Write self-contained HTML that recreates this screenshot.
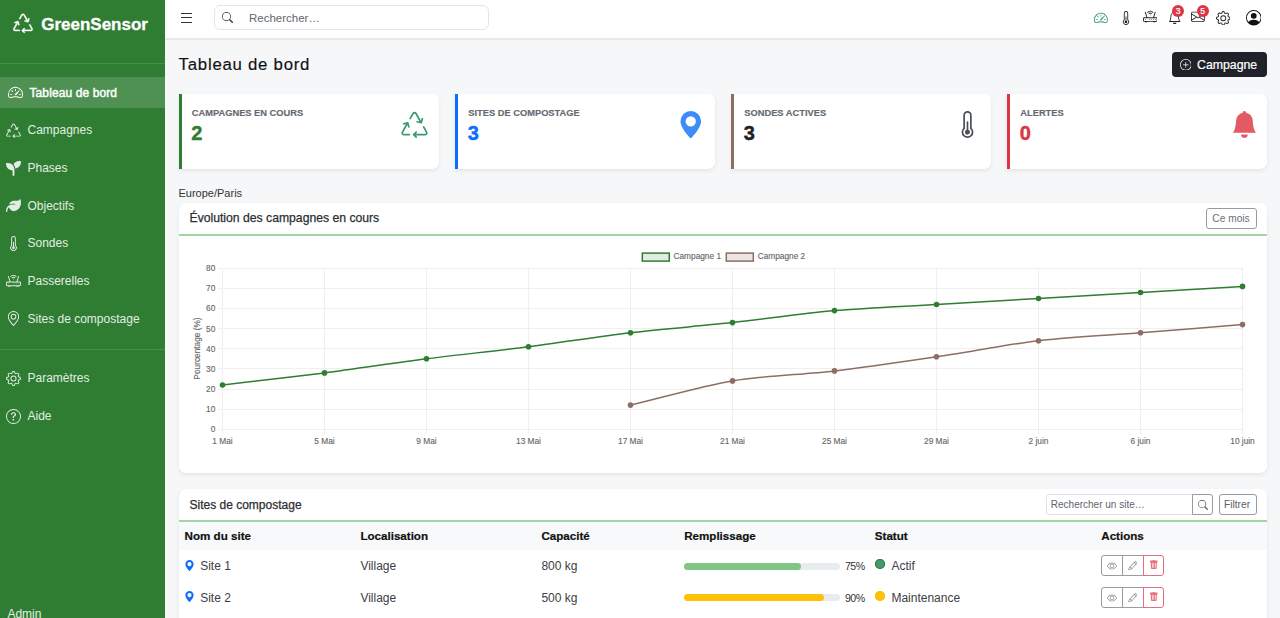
<!DOCTYPE html><html><head><meta charset="utf-8"><style>
*{box-sizing:border-box;margin:0;padding:0}
html,body{width:1280px;height:618px;overflow:hidden}
body{background:#f5f7f8;font-family:"Liberation Sans",sans-serif;position:relative;color:#212529}
.abs{position:absolute;white-space:nowrap}
.t{position:absolute;white-space:nowrap;line-height:1}
#sb{position:absolute;left:0;top:0;width:165px;height:618px;background:#2e7d32}
.sep{position:absolute;left:0;width:165px;height:1px;background:rgba(255,255,255,.13)}
.nav{position:absolute;left:0;width:165px;height:31px;color:#e3ede3;font-size:12px;line-height:31px;white-space:nowrap}
.nav span{position:absolute;left:27.5px;top:.6px}
.nav.act{background:rgba(255,255,255,.16);color:#fff}
#tb{position:absolute;left:165px;top:0;width:1115px;height:38px;background:#fff;border-bottom:2px solid #e8eaeb;box-sizing:content-box}
.card{position:absolute;background:#fff;border-radius:7px;box-shadow:0 2px 4px rgba(0,0,0,.075)}
.stat{top:93.5px;width:260px;height:75px;border-left:3.5px solid #2e7d32;border-radius:0 7px 7px 0}
.lab{position:absolute;left:10.3px;top:15.2px;font-size:9.3px;line-height:1;font-weight:bold;color:#646a72;-webkit-text-stroke:.15px #646a72;white-space:nowrap}
.num{position:absolute;left:9.8px;top:29.5px;font-size:20px;line-height:1;font-weight:bold;-webkit-text-stroke:.4px currentColor;white-space:nowrap}
.btn{position:absolute;border:1px solid #979ca1;border-radius:3px;background:#fff}
th,td{text-align:left}
</style></head><body>
<div id="sb">
<svg class="abs" style="left:13.3px;top:12.7px;overflow:visible;stroke:#fff;stroke-width:.25" width="20" height="20" viewBox="0 0 16 16" fill="#fff"><path d="M9.302 1.256a1.5 1.5 0 0 0-2.604 0l-1.704 2.98a.5.5 0 0 0 .869.497l1.703-2.981a.5.5 0 0 1 .868 0l2.54 4.444-1.256-.337a.5.5 0 1 0-.26.966l2.415.647a.5.5 0 0 0 .613-.353l.647-2.415a.5.5 0 1 0-.966-.259l-.333 1.242zM2.973 7.773l-1.255.337a.5.5 0 1 1-.26-.966l2.416-.647a.5.5 0 0 1 .612.353l.647 2.415a.5.5 0 0 1-.966.259l-.333-1.242-2.545 4.454a.5.5 0 0 0 .434.748H5a.5.5 0 0 1 0 1H1.723A1.5 1.5 0 0 1 .421 12.24zm10.89 1.463a.5.5 0 1 0-.868.496l1.716 3.004a.5.5 0 0 1-.434.748h-5.57l.647-.646a.5.5 0 1 0-.708-.707l-1.5 1.5a.5.5 0 0 0 0 .707l1.5 1.5a.5.5 0 1 0 .708-.707l-.647-.647h5.57a1.5 1.5 0 0 0 1.302-2.244z"/></svg>
<div class="t" style="left:41.2px;top:16.4px;font-size:17px;font-weight:bold;color:#fff;-webkit-text-stroke:.3px #fff">GreenSensor</div>
<div class="sep" style="top:62.5px"></div>
<div class="nav act" style="top:77.0px">
<svg class="abs" style="left:8.2px;top:8px" width="15" height="15" viewBox="0 0 16 16" fill="#fff"><path d="M8 4a.5.5 0 0 1 .5.5V6a.5.5 0 0 1-1 0V4.5A.5.5 0 0 1 8 4M3.732 5.732a.5.5 0 0 1 .707 0l.915.914a.5.5 0 1 1-.708.708l-.914-.915a.5.5 0 0 1 0-.707M2 10a.5.5 0 0 1 .5-.5h1.586a.5.5 0 0 1 0 1H2.5A.5.5 0 0 1 2 10m9.5 0a.5.5 0 0 1 .5-.5h1.5a.5.5 0 0 1 0 1H12a.5.5 0 0 1-.5-.5m.754-4.246a.39.39 0 0 0-.527-.02L7.547 9.31a.91.91 0 1 0 1.302 1.258l3.434-4.297a.39.39 0 0 0-.029-.518z"/><path fill-rule="evenodd" d="M0 10a8 8 0 1 1 15.547 2.661c-.442 1.253-1.845 1.602-2.932 1.25C11.309 13.488 9.475 13 8 13c-1.474 0-3.31.488-4.615.911-1.087.352-2.49.003-2.932-1.25A8 8 0 0 1 0 10m8-7a7 7 0 0 0-6.603 9.329c.203.575.923.876 1.68.63C4.397 12.533 6.358 12 8 12s3.604.532 4.923.96c.757.245 1.477-.056 1.68-.631A7 7 0 0 0 8 3"/></svg>
<span style="left:29.5px;letter-spacing:.1px;font-size:12px;-webkit-text-stroke:.45px #fff">Tableau de bord</span>
</div>
<div class="nav" style="top:114.69999999999999px">
<svg class="abs" style="left:6.2px;top:8px" width="15" height="15" viewBox="0 0 16 16" fill="#e3ede3"><path d="M9.302 1.256a1.5 1.5 0 0 0-2.604 0l-1.704 2.98a.5.5 0 0 0 .869.497l1.703-2.981a.5.5 0 0 1 .868 0l2.54 4.444-1.256-.337a.5.5 0 1 0-.26.966l2.415.647a.5.5 0 0 0 .613-.353l.647-2.415a.5.5 0 1 0-.966-.259l-.333 1.242zM2.973 7.773l-1.255.337a.5.5 0 1 1-.26-.966l2.416-.647a.5.5 0 0 1 .612.353l.647 2.415a.5.5 0 0 1-.966.259l-.333-1.242-2.545 4.454a.5.5 0 0 0 .434.748H5a.5.5 0 0 1 0 1H1.723A1.5 1.5 0 0 1 .421 12.24zm10.89 1.463a.5.5 0 1 0-.868.496l1.716 3.004a.5.5 0 0 1-.434.748h-5.57l.647-.646a.5.5 0 1 0-.708-.707l-1.5 1.5a.5.5 0 0 0 0 .707l1.5 1.5a.5.5 0 1 0 .708-.707l-.647-.647h5.57a1.5 1.5 0 0 0 1.302-2.244z"/></svg>
<span>Campagnes</span>
</div>
<div class="nav" style="top:152.5px">
<svg class="abs" style="left:6.2px;top:8px" width="15" height="15" viewBox="0 0 512 512" fill="#e3ede3"><path d="M512 32c0 113.6-84.6 207.5-194.2 222c-7.1-53.4-30.6-101.6-65.3-139.3C290.8 46.3 364 0 448 0h32c17.7 0 32 14.3 32 32zM0 96C0 78.3 14.3 64 32 64H64c123.7 0 224 100.3 224 224v32V480c0 17.7-14.3 32-32 32s-32-14.3-32-32V320C100.3 320 0 219.7 0 96z"/></svg>
<span>Phases</span>
</div>
<div class="nav" style="top:190.2px">
<svg class="abs" style="left:6.2px;top:8px" width="15" height="15" viewBox="0 0 512 512" fill="#e3ede3"><path d="M272 96c-78.6 0-145.1 51.5-167.7 122.5c33.6-17 71.5-26.5 111.7-26.5h88c8.8 0 16 7.2 16 16s-7.2 16-16 16H288 216s0 0 0 0c-16.6 0-32.7 1.900-48.3 5.4c-25.9 5.9-49.9 16.4-71.4 30.7c0 0 0 0 0 0C38.3 298.8 0 364.9 0 440v16c0 13.3 10.7 24 24 24s24-10.7 24-24V440c0-48.7 20.7-92.5 53.8-123.2C121.6 392.3 190.3 448 272 448l1 0c132.1-.7 239-130.9 239-291.4c0-42.600-7.5-83.1-21.1-119.6c-2.6-6.9-12.7-6.6-16.2 .1C479.6 63.6 437.3 96 384 96H272z"/></svg>
<span>Objectifs</span>
</div>
<div class="nav" style="top:227.9px">
<svg class="abs" style="left:6.2px;top:8px" width="15" height="15" viewBox="0 0 16 16" fill="#e3ede3"><path d="M9.5 12.5a1.5 1.5 0 1 1-2-1.415V6.5a.5.5 0 0 1 1 0v4.585a1.5 1.5 0 0 1 1 1.415"/><path d="M5.5 2.5a2.5 2.5 0 0 1 5 0v7.55a3.5 3.5 0 1 1-5 0zM8 1a1.5 1.5 0 0 0-1.5 1.5v7.987l-.167.15a2.5 2.5 0 1 0 3.333 0l-.166-.15V2.5A1.5 1.5 0 0 0 8 1"/></svg>
<span>Sondes</span>
</div>
<div class="nav" style="top:265.6px">
<svg class="abs" style="left:6.2px;top:8px" width="15" height="15" viewBox="0 0 16 16" fill="#e3ede3"><path d="M5.525 3.025a3.5 3.5 0 0 1 4.95 0 .5.5 0 1 0 .707-.707 4.5 4.5 0 0 0-6.364 0 .5.5 0 0 0 .707.707"/><path d="M6.94 4.44a1.5 1.5 0 0 1 2.12 0 .5.5 0 0 0 .708-.708 2.5 2.5 0 0 0-3.536 0 .5.5 0 0 0 .707.707M2.5 11a.5.5 0 1 1 0-1 .5.5 0 0 1 0 1m4.5-.5a.5.5 0 1 0 1 0 .5.5 0 0 0-1 0m2.5.5a.5.5 0 1 1 0-1 .5.5 0 0 1 0 1m1.5-.5a.5.5 0 1 0 1 0 .5.5 0 0 0-1 0m2 0a.5.5 0 1 0 1 0 .5.5 0 0 0-1 0"/><path d="M2.974 2.342a.5.5 0 1 0-.948.316L3.806 8H1.5A1.5 1.5 0 0 0 0 9.5v2A1.5 1.5 0 0 0 1.5 13H2a.5.5 0 0 0 .5.5h2A.5.5 0 0 0 5 13h6a.5.5 0 0 0 .5.5h2a.5.5 0 0 0 .5-.5h.5a1.5 1.5 0 0 0 1.5-1.5v-2A1.5 1.5 0 0 0 14.5 8h-2.306l1.78-5.342a.5.5 0 1 0-.948-.316L11.14 8H4.86zM14.5 9a.5.5 0 0 1 .5.5v2a.5.5 0 0 1-.5.5h-13a.5.5 0 0 1-.5-.5v-2a.5.5 0 0 1 .5-.5z"/><path d="M8.5 5.5a.5.5 0 1 1-1 0 .5.5 0 0 1 1 0"/></svg>
<span>Passerelles</span>
</div>
<div class="nav" style="top:303.3px">
<svg class="abs" style="left:6.2px;top:8px" width="15" height="15" viewBox="0 0 16 16" fill="#e3ede3"><path d="M12.166 8.94c-.524 1.062-1.234 2.12-1.96 3.07A32 32 0 0 1 8 14.58a32 32 0 0 1-2.206-2.57c-.726-.95-1.436-2.008-1.960-3.070C3.304 7.867 3 6.862 3 6a5 5 0 0 1 10 0c0 .862-.305 1.867-.834 2.94M8 16s6-5.686 6-10A6 6 0 0 0 2 6c0 4.314 6 10 6 10"/><path d="M8 8a2 2 0 1 1 0-4 2 2 0 0 1 0 4m0 1a3 3 0 1 0 0-6 3 3 0 0 0 0 6"/></svg>
<span>Sites de compostage</span>
</div>
<div class="nav" style="top:362.7px">
<svg class="abs" style="left:6.2px;top:8px" width="15" height="15" viewBox="0 0 16 16" fill="#e3ede3"><path d="M8 4.754a3.246 3.246 0 1 0 0 6.492 3.246 3.246 0 0 0 0-6.492M5.754 8a2.246 2.246 0 1 1 4.492 0 2.246 2.246 0 0 1-4.492 0"/><path d="M9.796 1.343c-.527-1.79-3.065-1.79-3.592 0l-.094.319a.873.873 0 0 1-1.255.52l-.292-.16c-1.64-.892-3.433.902-2.54 2.541l.159.292a.873.873 0 0 1-.52 1.255l-.319.094c-1.79.527-1.790 3.065 0 3.592l.319.094a.873.873 0 0 1 .52 1.255l-.16.292c-.892 1.64.901 3.434 2.541 2.54l.292-.159a.873.873 0 0 1 1.255.52l.094.319c.527 1.79 3.065 1.79 3.592 0l.094-.319a.873.873 0 0 1 1.255-.52l.292.16c1.64.893 3.434-.902 2.54-2.541l-.159-.292a.873.873 0 0 1 .52-1.255l.319-.094c1.79-.527 1.79-3.065 0-3.592l-.319-.094a.873.873 0 0 1-.52-1.255l.16-.292c.893-1.64-.902-3.433-2.541-2.54l-.292.159a.873.873 0 0 1-1.255-.52zm-2.633.283c.246-.835 1.428-.835 1.674 0l.094.319a1.873 1.873 0 0 0 2.693 1.115l.291-.16c.764-.415 1.6.42 1.184 1.185l-.159.292a1.873 1.873 0 0 0 1.116 2.692l.318.094c.835.246.835 1.428 0 1.674l-.319.094a1.873 1.873 0 0 0-1.115 2.693l.16.291c.415.764-.42 1.6-1.185 1.184l-.291-.159a1.873 1.873 0 0 0-2.693 1.116l-.094.318c-.246.835-1.428.835-1.674 0l-.094-.319a1.873 1.873 0 0 0-2.692-1.115l-.292.16c-.764.415-1.6-.42-1.184-1.185l.159-.291A1.873 1.873 0 0 0 1.945 8.93l-.319-.094c-.835-.246-.835-1.428 0-1.674l.319-.094A1.873 1.873 0 0 0 3.060 4.377l-.16-.292c-.415-.764.42-1.6 1.185-1.184l.292.159a1.873 1.873 0 0 0 2.692-1.115z"/></svg>
<span>Paramètres</span>
</div>
<div class="nav" style="top:400.5px">
<svg class="abs" style="left:6.2px;top:8px" width="15" height="15" viewBox="0 0 16 16" fill="#e3ede3"><path d="M8 15A7 7 0 1 1 8 1a7 7 0 0 1 0 14m0 1A8 8 0 1 0 8 0a8 8 0 0 0 0 16"/><path d="M5.255 5.786a.237.237 0 0 0 .241.247h.825c.138 0 .248-.113.266-.25.09-.656.54-1.134 1.342-1.134.686 0 1.314.343 1.314 1.168 0 .635-.374.927-.965 1.371-.673.489-1.206 1.060-1.168 1.987l.003.217a.25.25 0 0 0 .25.246h.811a.25.25 0 0 0 .25-.25v-.105c0-.718.273-.927 1.010-1.486.609-.463 1.244-.977 1.244-2.056 0-1.511-1.276-2.241-2.673-2.241-1.267 0-2.655.59-2.750 2.286m1.557 5.763c0 .533.425.927 1.010.927.609 0 1.028-.394 1.028-.927 0-.552-.42-.94-1.029-.94-.584 0-1.009.388-1.009.94"/></svg>
<span>Aide</span>
</div>
<div class="sep" style="top:348.5px"></div>
<div class="t" style="left:7.4px;top:608.3px;font-size:12px;color:#e3ede3">Admin</div>
</div>
<div id="tb"></div>
<div class="abs" style="left:181px;top:12.5px;width:11.3px;height:1.2px;background:#333"></div><div class="abs" style="left:181px;top:17px;width:11.3px;height:1.2px;background:#333"></div><div class="abs" style="left:181px;top:21.5px;width:11.3px;height:1.2px;background:#333"></div>
<div class="abs" style="left:214px;top:5.3px;width:275px;height:25px;border:1px solid #e3e5e8;border-radius:6px;background:#fff"></div>
<svg class="abs" style="left:222px;top:12.2px" width="11" height="11" viewBox="0 0 16 16" fill="#333"><path d="M11.742 10.344a6.5 6.5 0 1 0-1.397 1.398h-.001q.044.06.098.115l3.85 3.85a1 1 0 0 0 1.415-1.414l-3.85-3.85a1 1 0 0 0-.115-.1zM12 6.5a5.5 5.5 0 1 1-11 0 5.5 5.5 0 0 1 11 0"/></svg>
<div class="t" style="left:249px;top:12.8px;font-size:11.5px;color:#62686e">Rechercher…</div>
<svg class="abs" style="left:1094.3px;top:11.0px" width="13.8" height="13.8" viewBox="0 0 16 16" fill="#3a9a6e"><path d="M8 4a.5.5 0 0 1 .5.5V6a.5.5 0 0 1-1 0V4.5A.5.5 0 0 1 8 4M3.732 5.732a.5.5 0 0 1 .707 0l.915.914a.5.5 0 1 1-.708.708l-.914-.915a.5.5 0 0 1 0-.707M2 10a.5.5 0 0 1 .5-.5h1.586a.5.5 0 0 1 0 1H2.5A.5.5 0 0 1 2 10m9.5 0a.5.5 0 0 1 .5-.5h1.5a.5.5 0 0 1 0 1H12a.5.5 0 0 1-.5-.5m.754-4.246a.39.39 0 0 0-.527-.02L7.547 9.31a.91.91 0 1 0 1.302 1.258l3.434-4.297a.39.39 0 0 0-.029-.518z"/><path fill-rule="evenodd" d="M0 10a8 8 0 1 1 15.547 2.661c-.442 1.253-1.845 1.602-2.932 1.25C11.309 13.488 9.475 13 8 13c-1.474 0-3.31.488-4.615.911-1.087.352-2.49.003-2.932-1.25A8 8 0 0 1 0 10m8-7a7 7 0 0 0-6.603 9.329c.203.575.923.876 1.68.63C4.397 12.533 6.358 12 8 12s3.604.532 4.923.96c.757.245 1.477-.056 1.68-.631A7 7 0 0 0 8 3"/></svg>
<svg class="abs" style="left:1118.6px;top:10.9px" width="14" height="14" viewBox="0 0 16 16" fill="#212529"><path d="M9.5 12.5a1.5 1.5 0 1 1-2-1.415V6.5a.5.5 0 0 1 1 0v4.585a1.5 1.5 0 0 1 1 1.415"/><path d="M5.5 2.5a2.5 2.5 0 0 1 5 0v7.55a3.5 3.5 0 1 1-5 0zM8 1a1.5 1.5 0 0 0-1.5 1.5v7.987l-.167.15a2.5 2.5 0 1 0 3.333 0l-.166-.15V2.5A1.5 1.5 0 0 0 8 1"/></svg>
<svg class="abs" style="left:1142.7px;top:10.0px" width="14.5" height="14.5" viewBox="0 0 16 16" fill="#212529"><path d="M5.525 3.025a3.5 3.5 0 0 1 4.95 0 .5.5 0 1 0 .707-.707 4.5 4.5 0 0 0-6.364 0 .5.5 0 0 0 .707.707"/><path d="M6.94 4.44a1.5 1.5 0 0 1 2.12 0 .5.5 0 0 0 .708-.708 2.5 2.5 0 0 0-3.536 0 .5.5 0 0 0 .707.707M2.5 11a.5.5 0 1 1 0-1 .5.5 0 0 1 0 1m4.5-.5a.5.5 0 1 0 1 0 .5.5 0 0 0-1 0m2.5.5a.5.5 0 1 1 0-1 .5.5 0 0 1 0 1m1.5-.5a.5.5 0 1 0 1 0 .5.5 0 0 0-1 0m2 0a.5.5 0 1 0 1 0 .5.5 0 0 0-1 0"/><path d="M2.974 2.342a.5.5 0 1 0-.948.316L3.806 8H1.5A1.5 1.5 0 0 0 0 9.5v2A1.5 1.5 0 0 0 1.5 13H2a.5.5 0 0 0 .5.5h2A.5.5 0 0 0 5 13h6a.5.5 0 0 0 .5.5h2a.5.5 0 0 0 .5-.5h.5a1.5 1.5 0 0 0 1.5-1.5v-2A1.5 1.5 0 0 0 14.5 8h-2.306l1.78-5.342a.5.5 0 1 0-.948-.316L11.14 8H4.86zM14.5 9a.5.5 0 0 1 .5.5v2a.5.5 0 0 1-.5.5h-13a.5.5 0 0 1-.5-.5v-2a.5.5 0 0 1 .5-.5z"/><path d="M8.5 5.5a.5.5 0 1 1-1 0 .5.5 0 0 1 1 0"/></svg>
<svg class="abs" style="left:1167.6px;top:10.8px" width="13.4" height="13.4" viewBox="0 0 16 16" fill="#212529"><path d="M8 16a2 2 0 0 0 2-2H6a2 2 0 0 0 2 2M8 1.918l-.797.161A4 4 0 0 0 4 6c0 .628-.134 2.197-.459 3.742-.16.767-.376 1.566-.663 2.258h10.244c-.287-.692-.502-1.49-.663-2.258C12.134 8.197 12 6.628 12 6a4 4 0 0 0-3.203-3.92zM14.22 12c.223.447.481.801.78 1H1c.299-.199.557-.553.78-1C2.68 10.2 3 6.88 3 6c0-2.42 1.72-4.44 4.005-4.901a1 1 0 1 1 1.99 0A5 5 0 0 1 13 6c0 .88.32 4.2 1.22 6"/></svg>
<div class="abs" style="left:1172px;top:5.3px;width:12px;height:12px;border-radius:6px;background:#dc3545;color:#fff;font-size:8.5px;line-height:12.5px;text-align:center;-webkit-text-stroke:.2px #fff">3</div>
<svg class="abs" style="left:1191.4px;top:10.2px" width="13.8" height="13.8" viewBox="0 0 16 16" fill="#212529"><path d="M0 4a2 2 0 0 1 2-2h12a2 2 0 0 1 2 2v8a2 2 0 0 1-2 2H2a2 2 0 0 1-2-2zm2-1a1 1 0 0 0-1 1v.217l7 4.2 7-4.2V4a1 1 0 0 0-1-1zm13 2.383-4.708 2.825L15 11.105zm-.034 6.876-5.64-3.471L8 9.583l-1.326-.795-5.64 3.47A1 1 0 0 0 2 13h12a1 1 0 0 0 .966-.741M1 11.105l4.708-2.897L1 5.383z"/></svg>
<div class="abs" style="left:1196.5px;top:5.3px;width:12px;height:12px;border-radius:6px;background:#dc3545;color:#fff;font-size:8.5px;line-height:12.5px;text-align:center;-webkit-text-stroke:.2px #fff">5</div>
<svg class="abs" style="left:1215.5px;top:10.5px" width="14.5" height="14.5" viewBox="0 0 16 16" fill="#212529"><path d="M8 4.754a3.246 3.246 0 1 0 0 6.492 3.246 3.246 0 0 0 0-6.492M5.754 8a2.246 2.246 0 1 1 4.492 0 2.246 2.246 0 0 1-4.492 0"/><path d="M9.796 1.343c-.527-1.79-3.065-1.79-3.592 0l-.094.319a.873.873 0 0 1-1.255.52l-.292-.16c-1.64-.892-3.433.902-2.54 2.541l.159.292a.873.873 0 0 1-.52 1.255l-.319.094c-1.79.527-1.790 3.065 0 3.592l.319.094a.873.873 0 0 1 .52 1.255l-.16.292c-.892 1.64.901 3.434 2.541 2.54l.292-.159a.873.873 0 0 1 1.255.52l.094.319c.527 1.79 3.065 1.79 3.592 0l.094-.319a.873.873 0 0 1 1.255-.52l.292.16c1.64.893 3.434-.902 2.54-2.541l-.159-.292a.873.873 0 0 1 .52-1.255l.319-.094c1.79-.527 1.79-3.065 0-3.592l-.319-.094a.873.873 0 0 1-.52-1.255l.16-.292c.893-1.64-.902-3.433-2.541-2.54l-.292.159a.873.873 0 0 1-1.255-.52zm-2.633.283c.246-.835 1.428-.835 1.674 0l.094.319a1.873 1.873 0 0 0 2.693 1.115l.291-.16c.764-.415 1.6.42 1.184 1.185l-.159.292a1.873 1.873 0 0 0 1.116 2.692l.318.094c.835.246.835 1.428 0 1.674l-.319.094a1.873 1.873 0 0 0-1.115 2.693l.16.291c.415.764-.42 1.6-1.185 1.184l-.291-.159a1.873 1.873 0 0 0-2.693 1.116l-.094.318c-.246.835-1.428.835-1.674 0l-.094-.319a1.873 1.873 0 0 0-2.692-1.115l-.292.16c-.764.415-1.6-.42-1.184-1.185l.159-.291A1.873 1.873 0 0 0 1.945 8.93l-.319-.094c-.835-.246-.835-1.428 0-1.674l.319-.094A1.873 1.873 0 0 0 3.060 4.377l-.16-.292c-.415-.764.42-1.6 1.185-1.184l.292.159a1.873 1.873 0 0 0 2.692-1.115z"/></svg>
<svg class="abs" style="left:1245.5px;top:10px" width="15.5" height="15.5" viewBox="0 0 16 16" fill="#111"><path d="M11 6a3 3 0 1 1-6 0 3 3 0 0 1 6 0"/><path fill-rule="evenodd" d="M0 8a8 8 0 1 1 16 0A8 8 0 0 1 0 8m8-7a7 7 0 0 0-5.468 11.37C3.242 11.226 4.805 10 8 10s4.757 1.225 5.468 2.37A7 7 0 0 0 8 1"/></svg>
<div class="t" style="left:178.6px;top:57.3px;font-size:16.8px;letter-spacing:.75px;color:#111;-webkit-text-stroke:.15px #111">Tableau de bord</div>
<div class="abs" style="left:1171.5px;top:52px;width:95.5px;height:25px;border-radius:4px;background:#1f2329"></div>
<svg class="abs" style="left:1179.8px;top:58.7px" width="11.6" height="11.6" viewBox="0 0 16 16" fill="#fff"><path d="M8 15A7 7 0 1 1 8 1a7 7 0 0 1 0 14m0 1A8 8 0 1 0 8 0a8 8 0 0 0 0 16"/><path d="M8 4a.5.5 0 0 1 .5.5v3h3a.5.5 0 0 1 0 1h-3v3a.5.5 0 0 1-1 0v-3h-3a.5.5 0 0 1 0-1h3v-3A.5.5 0 0 1 8 4"/></svg>
<div class="t" style="left:1197px;top:58.5px;font-size:12.3px;color:#fff;-webkit-text-stroke:.2px #fff">Campagne</div>
<div class="card stat" style="left:178.5px;border-left-color:#2e7d32"><div class="lab">CAMPAGNES EN COURS</div><div class="num" style="color:#2e7d32">2</div></div>
<svg class="abs" style="left:401.2px;top:110.8px" width="27" height="27" viewBox="0 0 16 16" fill="#3a9a6e"><path d="M9.302 1.256a1.5 1.5 0 0 0-2.604 0l-1.704 2.98a.5.5 0 0 0 .869.497l1.703-2.981a.5.5 0 0 1 .868 0l2.54 4.444-1.256-.337a.5.5 0 1 0-.26.966l2.415.647a.5.5 0 0 0 .613-.353l.647-2.415a.5.5 0 1 0-.966-.259l-.333 1.242zM2.973 7.773l-1.255.337a.5.5 0 1 1-.26-.966l2.416-.647a.5.5 0 0 1 .612.353l.647 2.415a.5.5 0 0 1-.966.259l-.333-1.242-2.545 4.454a.5.5 0 0 0 .434.748H5a.5.5 0 0 1 0 1H1.723A1.5 1.5 0 0 1 .421 12.24zm10.89 1.463a.5.5 0 1 0-.868.496l1.716 3.004a.5.5 0 0 1-.434.748h-5.57l.647-.646a.5.5 0 1 0-.708-.707l-1.5 1.5a.5.5 0 0 0 0 .707l1.5 1.5a.5.5 0 1 0 .708-.707l-.647-.647h5.57a1.5 1.5 0 0 0 1.302-2.244z"/></svg>
<div class="card stat" style="left:455px;border-left-color:#0d6efd"><div class="lab">SITES DE COMPOSTAGE</div><div class="num" style="color:#0d6efd">3</div></div>
<svg class="abs" style="left:677.0px;top:110.5px" width="27.5" height="27.5" viewBox="0 0 16 16" fill="#3d8bf7"><path d="M8 16s6-5.686 6-10A6 6 0 0 0 2 6c0 4.314 6 10 6 10m0-7a3 3 0 1 1 0-6 3 3 0 0 1 0 6"/></svg>
<div class="card stat" style="left:731px;border-left-color:#8d6e63"><div class="lab">SONDES ACTIVES</div><div class="num" style="color:#1f2329">3</div></div>
<svg class="abs" style="left:954px;top:111px" width="27" height="27" viewBox="0 0 16 16" fill="#4a4f55"><path d="M9.5 12.5a1.5 1.5 0 1 1-2-1.415V6.5a.5.5 0 0 1 1 0v4.585a1.5 1.5 0 0 1 1 1.415"/><path d="M5.5 2.5a2.5 2.5 0 0 1 5 0v7.55a3.5 3.5 0 1 1-5 0zM8 1a1.5 1.5 0 0 0-1.5 1.5v7.987l-.167.15a2.5 2.5 0 1 0 3.333 0l-.166-.15V2.5A1.5 1.5 0 0 0 8 1"/></svg>
<div class="card stat" style="left:1007px;border-left-color:#dc3545"><div class="lab">ALERTES</div><div class="num" style="color:#dc3545">0</div></div>
<svg class="abs" style="left:1230.6px;top:110.9px" width="26.8" height="26.8" viewBox="0 0 16 16" fill="#e45a64"><path d="M8 16a2 2 0 0 0 2-2H6a2 2 0 0 0 2 2m.995-14.901a1 1 0 1 0-1.99 0A5 5 0 0 0 3 6c0 1.098-.5 6-2 7h14c-1.5-1-2-5.902-2-7 0-2.42-1.72-4.44-4.005-4.901"/></svg>
<div class="t" style="left:178.5px;top:188.3px;font-size:11px;color:#333">Europe/Paris</div>
<div class="card" style="left:178.5px;top:203.2px;width:1088.5px;height:269.5px"></div>
<div class="t" style="left:189.5px;top:211.8px;font-size:12.2px;color:#2b2f33;-webkit-text-stroke:.25px #2b2f33">Évolution des campagnes en cours</div>
<div class="abs" style="left:178.5px;top:234px;width:1088.5px;height:2px;background:#a0d6a2"></div>
<div class="btn" style="left:1206px;top:208px;width:50.5px;height:20.5px"></div>
<div class="t" style="left:1212.3px;top:214px;font-size:10.2px;color:#6a7178">Ce mois</div>
<div class="card" style="left:178.5px;top:489px;width:1088.5px;height:160px"></div>
<div class="t" style="left:189.5px;top:498.5px;font-size:12px;color:#2b2f33;-webkit-text-stroke:.25px #2b2f33">Sites de compostage</div>
<div class="abs" style="left:1045.5px;top:494.3px;width:147px;height:20.3px;border:1px solid #dee2e6;border-radius:3px 0 0 3px;background:#fff"></div>
<div class="t" style="left:1050.8px;top:500px;font-size:10px;color:#5f666d">Rechercher un site…</div>
<div class="btn" style="left:1191.7px;top:494.3px;width:21.5px;height:20.3px;border-radius:0 3px 3px 0"></div>
<svg class="abs" style="left:1197.5px;top:499.5px" width="10" height="10" viewBox="0 0 16 16" fill="#555"><path d="M11.742 10.344a6.5 6.5 0 1 0-1.397 1.398h-.001q.044.06.098.115l3.85 3.85a1 1 0 0 0 1.415-1.414l-3.85-3.85a1 1 0 0 0-.115-.1zM12 6.5a5.5 5.5 0 1 1-11 0 5.5 5.5 0 0 1 11 0"/></svg>
<div class="btn" style="left:1218.5px;top:494.3px;width:38px;height:20.3px"></div>
<div class="t" style="left:1224px;top:500.3px;font-size:10.2px;color:#5a6167">Filtrer</div>
<div class="abs" style="left:178.5px;top:520px;width:1088.5px;height:2px;background:#a0d6a2"></div>
<div class="abs" style="left:178.5px;top:522px;width:1088.5px;height:27.7px;background:#f8f9fa"></div>
<div class="t" style="left:184.6px;top:529.6px;font-size:11.6px;font-weight:bold;color:#111;-webkit-text-stroke:.2px #111">Nom du site</div>
<div class="t" style="left:360.4px;top:529.6px;font-size:11.6px;font-weight:bold;color:#111;-webkit-text-stroke:.2px #111">Localisation</div>
<div class="t" style="left:541.4px;top:529.6px;font-size:11.6px;font-weight:bold;color:#111;-webkit-text-stroke:.2px #111">Capacité</div>
<div class="t" style="left:684.2px;top:529.6px;font-size:11.6px;font-weight:bold;color:#111;-webkit-text-stroke:.2px #111">Remplissage</div>
<div class="t" style="left:874.8px;top:529.6px;font-size:11.6px;font-weight:bold;color:#111;-webkit-text-stroke:.2px #111">Statut</div>
<div class="t" style="left:1101.3px;top:529.6px;font-size:11.6px;font-weight:bold;color:#111;-webkit-text-stroke:.2px #111">Actions</div>
<svg class="abs" style="left:184px;top:559.5px" width="11" height="11" viewBox="0 0 16 16" fill="#0d6efd"><path d="M8 16s6-5.686 6-10A6 6 0 0 0 2 6c0 4.314 6 10 6 10m0-7a3 3 0 1 1 0-6 3 3 0 0 1 0 6"/></svg>
<div class="t" style="left:200.2px;top:559.84px;font-size:12px;color:#3b4045">Site 1</div>
<div class="t" style="left:360.4px;top:559.84px;font-size:12px;color:#3b4045">Village</div>
<div class="t" style="left:541.4px;top:559.84px;font-size:12px;color:#3b4045">800 kg</div>
<div class="abs" style="left:684.2px;top:562.5px;width:155.6px;height:7px;border-radius:4px;background:#e9ecef"><div style="width:75%;height:7px;border-radius:4px;background:#81c784"></div></div>
<div class="t" style="left:845px;top:560.7px;font-size:10.6px;letter-spacing:-.55px;color:#333">75%</div>
<div class="abs" style="left:874.8px;top:558.9px;width:10.5px;height:10.5px;border-radius:50%;background:#449a6c;box-shadow:inset 0 0 0 1px #2f7f45"></div>
<div class="t" style="left:891.4px;top:559.84px;font-size:12px;color:#3b4045">Actif</div>
<div class="btn" style="left:1101px;top:555.4px;width:21.5px;height:20.5px;border-radius:3px 0 0 3px"></div>
<div class="btn" style="left:1122px;top:555.4px;width:21.5px;height:20.5px;border-radius:0"></div>
<div class="btn" style="left:1143px;top:555.4px;width:21px;height:20.5px;border-radius:0 3px 3px 0;border-color:#e5707b"></div>
<svg class="abs" style="left:1106.7px;top:560.6px" width="10" height="10" viewBox="0 0 16 16" fill="#8a9096"><path d="M16 8s-3-5.5-8-5.5S0 8 0 8s3 5.5 8 5.5S16 8 16 8M1.173 8a13 13 0 0 1 1.66-2.043C4.12 4.668 5.88 3.5 8 3.5s3.879 1.168 5.168 2.457A13 13 0 0 1 14.828 8q-.086.13-.195.288c-.335.48-.83 1.12-1.465 1.755C11.879 11.332 10.119 12.5 8 12.5s-3.879-1.168-5.168-2.457A13 13 0 0 1 1.172 8z"/><path d="M8 5.5a2.5 2.5 0 1 0 0 5 2.5 2.5 0 0 0 0-5M4.5 8a3.5 3.5 0 1 1 7 0 3.5 3.5 0 0 1-7 0"/></svg>
<svg class="abs" style="left:1127.6px;top:560.6px" width="9.6" height="9.6" viewBox="0 0 16 16" fill="#7d838a"><path d="M12.146.146a.5.5 0 0 1 .708 0l3 3a.5.5 0 0 1 0 .708l-10 10a.5.5 0 0 1-.168.11l-5 2a.5.5 0 0 1-.65-.65l2-5a.5.5 0 0 1 .11-.168zM11.207 2.5 13.5 4.793 14.793 3.5 12.5 1.207zm1.586 3L10.5 3.207 4 9.707V10h.5a.5.5 0 0 1 .5.5v.5h.5a.5.5 0 0 1 .5.5v.5h.293zm-9.761 5.175-.106.106-1.528 3.821 3.821-1.528.106-.106A.5.5 0 0 1 5 12.5V12h-.5a.5.5 0 0 1-.5-.5V11h-.5a.5.5 0 0 1-.468-.325"/></svg>
<svg class="abs" style="left:1148.8px;top:560.4px" width="9.6" height="9.6" viewBox="0 0 16 16" fill="#e8737e"><path d="M2.5 1a1 1 0 0 0-1 1v1a1 1 0 0 0 1 1H3v9a2 2 0 0 0 2 2h6a2 2 0 0 0 2-2V4h.5a1 1 0 0 0 1-1V2a1 1 0 0 0-1-1H10a1 1 0 0 0-1-1H7a1 1 0 0 0-1 1zm3 4a.5.5 0 0 1 .5.5v7a.5.5 0 0 1-1 0v-7a.5.5 0 0 1 .5-.5M8 5a.5.5 0 0 1 .5.5v7a.5.5 0 0 1-1 0v-7A.5.5 0 0 1 8 5m3 .5v7a.5.5 0 0 1-1 0v-7a.5.5 0 0 1 1 0"/></svg>
<svg class="abs" style="left:184px;top:591.4px" width="11" height="11" viewBox="0 0 16 16" fill="#0d6efd"><path d="M8 16s6-5.686 6-10A6 6 0 0 0 2 6c0 4.314 6 10 6 10m0-7a3 3 0 1 1 0-6 3 3 0 0 1 0 6"/></svg>
<div class="t" style="left:200.2px;top:591.74px;font-size:12px;color:#3b4045">Site 2</div>
<div class="t" style="left:360.4px;top:591.74px;font-size:12px;color:#3b4045">Village</div>
<div class="t" style="left:541.4px;top:591.74px;font-size:12px;color:#3b4045">500 kg</div>
<div class="abs" style="left:684.2px;top:594.4px;width:155.6px;height:7px;border-radius:4px;background:#e9ecef"><div style="width:90%;height:7px;border-radius:4px;background:#ffc107"></div></div>
<div class="t" style="left:845px;top:592.6px;font-size:10.6px;letter-spacing:-.55px;color:#333">90%</div>
<div class="abs" style="left:874.8px;top:590.8px;width:10.5px;height:10.5px;border-radius:50%;background:#ffc107;box-shadow:inset 0 0 0 1px #ffc107"></div>
<div class="t" style="left:891.4px;top:591.74px;font-size:12px;color:#3b4045">Maintenance</div>
<div class="btn" style="left:1101px;top:587.3px;width:21.5px;height:20.5px;border-radius:3px 0 0 3px"></div>
<div class="btn" style="left:1122px;top:587.3px;width:21.5px;height:20.5px;border-radius:0"></div>
<div class="btn" style="left:1143px;top:587.3px;width:21px;height:20.5px;border-radius:0 3px 3px 0;border-color:#e5707b"></div>
<svg class="abs" style="left:1106.7px;top:592.5px" width="10" height="10" viewBox="0 0 16 16" fill="#8a9096"><path d="M16 8s-3-5.5-8-5.5S0 8 0 8s3 5.5 8 5.5S16 8 16 8M1.173 8a13 13 0 0 1 1.66-2.043C4.12 4.668 5.88 3.5 8 3.5s3.879 1.168 5.168 2.457A13 13 0 0 1 14.828 8q-.086.13-.195.288c-.335.48-.83 1.12-1.465 1.755C11.879 11.332 10.119 12.5 8 12.5s-3.879-1.168-5.168-2.457A13 13 0 0 1 1.172 8z"/><path d="M8 5.5a2.5 2.5 0 1 0 0 5 2.5 2.5 0 0 0 0-5M4.5 8a3.5 3.5 0 1 1 7 0 3.5 3.5 0 0 1-7 0"/></svg>
<svg class="abs" style="left:1127.6px;top:592.5px" width="9.6" height="9.6" viewBox="0 0 16 16" fill="#7d838a"><path d="M12.146.146a.5.5 0 0 1 .708 0l3 3a.5.5 0 0 1 0 .708l-10 10a.5.5 0 0 1-.168.11l-5 2a.5.5 0 0 1-.65-.65l2-5a.5.5 0 0 1 .11-.168zM11.207 2.5 13.5 4.793 14.793 3.5 12.5 1.207zm1.586 3L10.5 3.207 4 9.707V10h.5a.5.5 0 0 1 .5.5v.5h.5a.5.5 0 0 1 .5.5v.5h.293zm-9.761 5.175-.106.106-1.528 3.821 3.821-1.528.106-.106A.5.5 0 0 1 5 12.5V12h-.5a.5.5 0 0 1-.5-.5V11h-.5a.5.5 0 0 1-.468-.325"/></svg>
<svg class="abs" style="left:1148.8px;top:592.3px" width="9.6" height="9.6" viewBox="0 0 16 16" fill="#e8737e"><path d="M2.5 1a1 1 0 0 0-1 1v1a1 1 0 0 0 1 1H3v9a2 2 0 0 0 2 2h6a2 2 0 0 0 2-2V4h.5a1 1 0 0 0 1-1V2a1 1 0 0 0-1-1H10a1 1 0 0 0-1-1H7a1 1 0 0 0-1 1zm3 4a.5.5 0 0 1 .5.5v7a.5.5 0 0 1-1 0v-7a.5.5 0 0 1 .5-.5M8 5a.5.5 0 0 1 .5.5v7a.5.5 0 0 1-1 0v-7A.5.5 0 0 1 8 5m3 .5v7a.5.5 0 0 1-1 0v-7a.5.5 0 0 1 1 0"/></svg>
<svg class="abs" style="left:0;top:0" width="1280" height="618" viewBox="0 0 1280 618"><g stroke="#efefef" stroke-width="1" shape-rendering="crispEdges"><line x1="217.5" y1="429.2" x2="1242.5" y2="429.2"/><line x1="217.5" y1="409.1" x2="1242.5" y2="409.1"/><line x1="217.5" y1="389.0" x2="1242.5" y2="389.0"/><line x1="217.5" y1="368.9" x2="1242.5" y2="368.9"/><line x1="217.5" y1="348.8" x2="1242.5" y2="348.8"/><line x1="217.5" y1="328.6" x2="1242.5" y2="328.6"/><line x1="217.5" y1="308.5" x2="1242.5" y2="308.5"/><line x1="217.5" y1="288.4" x2="1242.5" y2="288.4"/><line x1="217.5" y1="268.3" x2="1242.5" y2="268.3"/><line x1="222.5" y1="268.2" x2="222.5" y2="434.3"/><line x1="324.5" y1="268.2" x2="324.5" y2="434.3"/><line x1="426.5" y1="268.2" x2="426.5" y2="434.3"/><line x1="528.5" y1="268.2" x2="528.5" y2="434.3"/><line x1="630.5" y1="268.2" x2="630.5" y2="434.3"/><line x1="732.5" y1="268.2" x2="732.5" y2="434.3"/><line x1="834.5" y1="268.2" x2="834.5" y2="434.3"/><line x1="936.5" y1="268.2" x2="936.5" y2="434.3"/><line x1="1038.5" y1="268.2" x2="1038.5" y2="434.3"/><line x1="1140.5" y1="268.2" x2="1140.5" y2="434.3"/><line x1="1242.5" y1="268.2" x2="1242.5" y2="434.3"/></g><g font-family="Liberation Sans" font-size="8.3" fill="#666" stroke="#666" stroke-width=".12"><text x="215.3" y="432.1" text-anchor="end">0</text><text x="215.3" y="412.0" text-anchor="end">10</text><text x="215.3" y="391.9" text-anchor="end">20</text><text x="215.3" y="371.8" text-anchor="end">30</text><text x="215.3" y="351.7" text-anchor="end">40</text><text x="215.3" y="331.5" text-anchor="end">50</text><text x="215.3" y="311.4" text-anchor="end">60</text><text x="215.3" y="291.3" text-anchor="end">70</text><text x="215.3" y="271.2" text-anchor="end">80</text><text x="222.5" y="443.5" text-anchor="middle">1 Mai</text><text x="324.5" y="443.5" text-anchor="middle">5 Mai</text><text x="426.5" y="443.5" text-anchor="middle">9 Mai</text><text x="528.5" y="443.5" text-anchor="middle">13 Mai</text><text x="630.5" y="443.5" text-anchor="middle">17 Mai</text><text x="732.5" y="443.5" text-anchor="middle">21 Mai</text><text x="834.5" y="443.5" text-anchor="middle">25 Mai</text><text x="936.5" y="443.5" text-anchor="middle">29 Mai</text><text x="1038.5" y="443.5" text-anchor="middle">2 juin</text><text x="1140.5" y="443.5" text-anchor="middle">6 juin</text><text x="1242.5" y="443.5" text-anchor="middle">10 juin</text><text transform="translate(199.5 348.5) rotate(-90)" text-anchor="middle">Pourcentage (%)</text><text x="673.5" y="259.4">Campagne 1</text><text x="757.7" y="259.4">Campagne 2</text></g><rect x="642.3" y="253.1" width="27" height="8" fill="#e3eae3" stroke="#2e7d32" stroke-width="1.5"/><rect x="726.3" y="253.1" width="27" height="8" fill="#ebe6e4" stroke="#8d6e63" stroke-width="1.5"/><path d="M222.5 385.0 C253.1 381.3 293.9 376.8 324.5 372.9 C355.1 369.0 395.9 362.7 426.5 358.8 C457.1 354.9 497.9 350.7 528.5 346.7 C559.1 342.8 599.8 336.3 630.5 332.7 C661.0 329.1 701.9 325.9 732.5 322.6 C763.1 319.3 803.8 313.3 834.5 310.6 C865.0 307.8 905.9 306.3 936.5 304.5 C967.1 302.7 1007.9 300.3 1038.5 298.5 C1069.1 296.7 1109.9 294.3 1140.5 292.5 C1171.1 290.6 1211.9 288.2 1242.5 286.4" fill="none" stroke="#2e7d32" stroke-width="1.5"/><path d="M630.5 405.1 C661.1 397.8 701.6 386.1 732.5 380.9 C762.8 375.9 804.0 374.5 834.5 370.9 C865.2 367.3 905.9 361.3 936.5 356.8 C967.1 352.3 1007.8 344.4 1038.5 340.7 C1069.0 337.1 1109.9 335.1 1140.5 332.7 C1171.1 330.3 1211.9 327.0 1242.5 324.6" fill="none" stroke="#8d6e63" stroke-width="1.5"/><circle cx="222.5" cy="385.0" r="2.8" fill="#2e7d32"/><circle cx="324.5" cy="372.9" r="2.8" fill="#2e7d32"/><circle cx="426.5" cy="358.8" r="2.8" fill="#2e7d32"/><circle cx="528.5" cy="346.7" r="2.8" fill="#2e7d32"/><circle cx="630.5" cy="332.7" r="2.8" fill="#2e7d32"/><circle cx="732.5" cy="322.6" r="2.8" fill="#2e7d32"/><circle cx="834.5" cy="310.6" r="2.8" fill="#2e7d32"/><circle cx="936.5" cy="304.5" r="2.8" fill="#2e7d32"/><circle cx="1038.5" cy="298.5" r="2.8" fill="#2e7d32"/><circle cx="1140.5" cy="292.5" r="2.8" fill="#2e7d32"/><circle cx="1242.5" cy="286.4" r="2.8" fill="#2e7d32"/><circle cx="630.5" cy="405.1" r="2.8" fill="#8d6e63"/><circle cx="732.5" cy="380.9" r="2.8" fill="#8d6e63"/><circle cx="834.5" cy="370.9" r="2.8" fill="#8d6e63"/><circle cx="936.5" cy="356.8" r="2.8" fill="#8d6e63"/><circle cx="1038.5" cy="340.7" r="2.8" fill="#8d6e63"/><circle cx="1140.5" cy="332.7" r="2.8" fill="#8d6e63"/><circle cx="1242.5" cy="324.6" r="2.8" fill="#8d6e63"/></svg>
</body></html>
